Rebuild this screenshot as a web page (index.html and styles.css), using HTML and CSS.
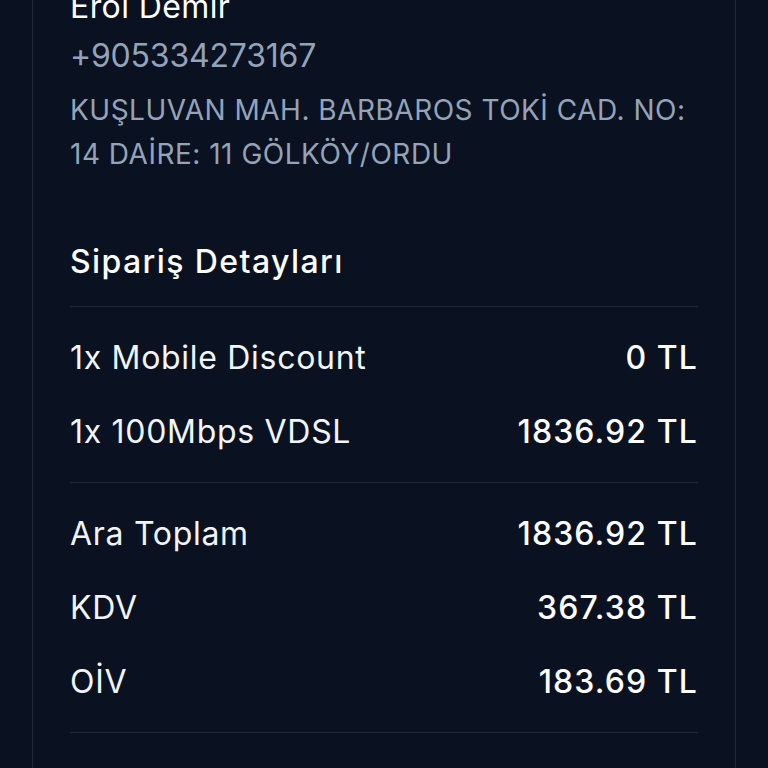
FILE: index.html
```html
<!DOCTYPE html>
<html lang="tr">
<head>
    <meta charset="UTF-8">
    <meta name="viewport" content="width=device-width, initial-scale=1.0">
    <title>Sipariş Özeti</title>
    <link rel="stylesheet" href="styles.css">
</head>
<body>
    <div class="card">
        <div class="customer">
            <div class="customer-name">Erol Demir</div>
            <div class="customer-phone">+905334273167</div>
            <div class="customer-address">KUŞLUVAN MAH. BARBAROS TOKİ CAD. NO: 14 DAİRE: 11 GÖLKÖY/ORDU</div>
        </div>
        <h2 class="section-title">Sipariş Detayları</h2>
        <div class="rows">
            <div class="row"><span class="label">1x Mobile Discount</span><span class="value">0 TL</span></div>
            <div class="row"><span class="label">1x 100Mbps VDSL</span><span class="value">1836.92 TL</span></div>
        </div>
        <div class="rows">
            <div class="row"><span class="label">Ara Toplam</span><span class="value">1836.92 TL</span></div>
            <div class="row"><span class="label">KDV</span><span class="value">367.38 TL</span></div>
            <div class="row"><span class="label">OİV</span><span class="value">183.69 TL</span></div>
        </div>
    </div>
</body>
</html>
```

FILE: styles.css
```css
body {
    margin: 0;
    background-color: #0a1120;
    font-family: Inter, "Noto Sans", sans-serif;
    font-feature-settings: "calt" 0;
    color: #f1f5f9;
    height: 768px;
    overflow: hidden;
}
.card {
    margin: -13px 32px 0;
    padding: 0 37px 60px;
    border-left: 1px solid #1e293b;
    border-right: 1px solid #1e293b;
    background-color: #0a1120;
}
.customer {
    display: flex;
    flex-direction: column;
}
.customer-name {
    font-size: 32px;
    line-height: 40px;
    letter-spacing: 0.4px;
    color: #ffffff;
}
.customer-phone {
    margin-top: 9px;
    font-size: 32px;
    line-height: 40px;
    letter-spacing: -0.2px;
    color: #94a3b8;
}
.customer-address {
    margin-top: 12px;
    font-size: 28px;
    line-height: 44px;
    letter-spacing: 0.5px;
    color: #94a3b8;
}
.section-title {
    margin: 66px 0 0;
    padding-bottom: 24px;
    border-bottom: 1px solid #1e293b;
    font-size: 32px;
    line-height: 40px;
    font-weight: 500;
    letter-spacing: 1.4px;
    color: #ffffff;
}
.rows {
    display: flex;
    flex-direction: column;
    gap: 34px;
    padding: 31px 0 30px;
    border-bottom: 1px solid #1e293b;
}
.row {
    display: flex;
    justify-content: space-between;
    font-size: 32px;
    line-height: 40px;
}
.label {
    letter-spacing: 0.7px;
    color: #f1f5f9;
}
.value {
    font-weight: 500;
    letter-spacing: 1.1px;
    color: #ffffff;
}
```
